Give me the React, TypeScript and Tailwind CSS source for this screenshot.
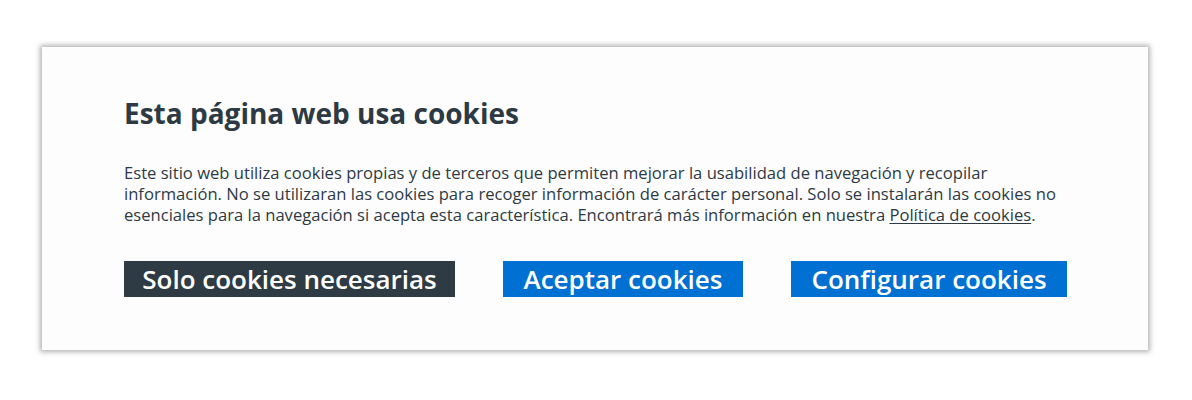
export default function App() {
  const font = { fontFamily: "'Open Sans', Lato, sans-serif" };
  return (
    <div className="w-[1192px] h-[400px] bg-white pt-[47px] pl-[42px]" style={font}>
      <div className="w-[1106px] h-[303px] bg-[#fdfdfd] shadow-[0_0_5px_2px_rgba(0,0,0,0.3)] pl-[82px] pr-[40px] pt-[49px]">
        <h2 className="text-[28px] leading-[35px] font-bold text-[#2d3a44]">
          Esta página web usa cookies
        </h2>
        <p className="mt-[31px] text-[16.6px] leading-[21px] text-[#2d3a44]">
          Este sitio web utiliza cookies propias y de terceros que permiten mejorar la usabilidad de navegación y recopilar
          <br />
          información. No se utilizaran las cookies para recoger información de carácter personal. Solo se instalarán las cookies no
          <br />
          esenciales para la navegación si acepta esta característica. Encontrará más información en nuestra{" "}
          <a className="underline underline-offset-2">Política de cookies</a>.
        </p>
        <div className="mt-[36px] flex gap-[48px]">
          <button className="w-[331px] h-[36px] bg-[#2e3b45] text-white text-[26px] font-semibold leading-none">
            Solo cookies necesarias
          </button>
          <button className="w-[240px] h-[36px] bg-[#0070d2] text-white text-[26px] font-semibold leading-none">
            Aceptar cookies
          </button>
          <button className="w-[276px] h-[36px] bg-[#0070d2] text-white text-[26px] font-semibold leading-none">
            Configurar cookies
          </button>
        </div>
      </div>
    </div>
  );
}
